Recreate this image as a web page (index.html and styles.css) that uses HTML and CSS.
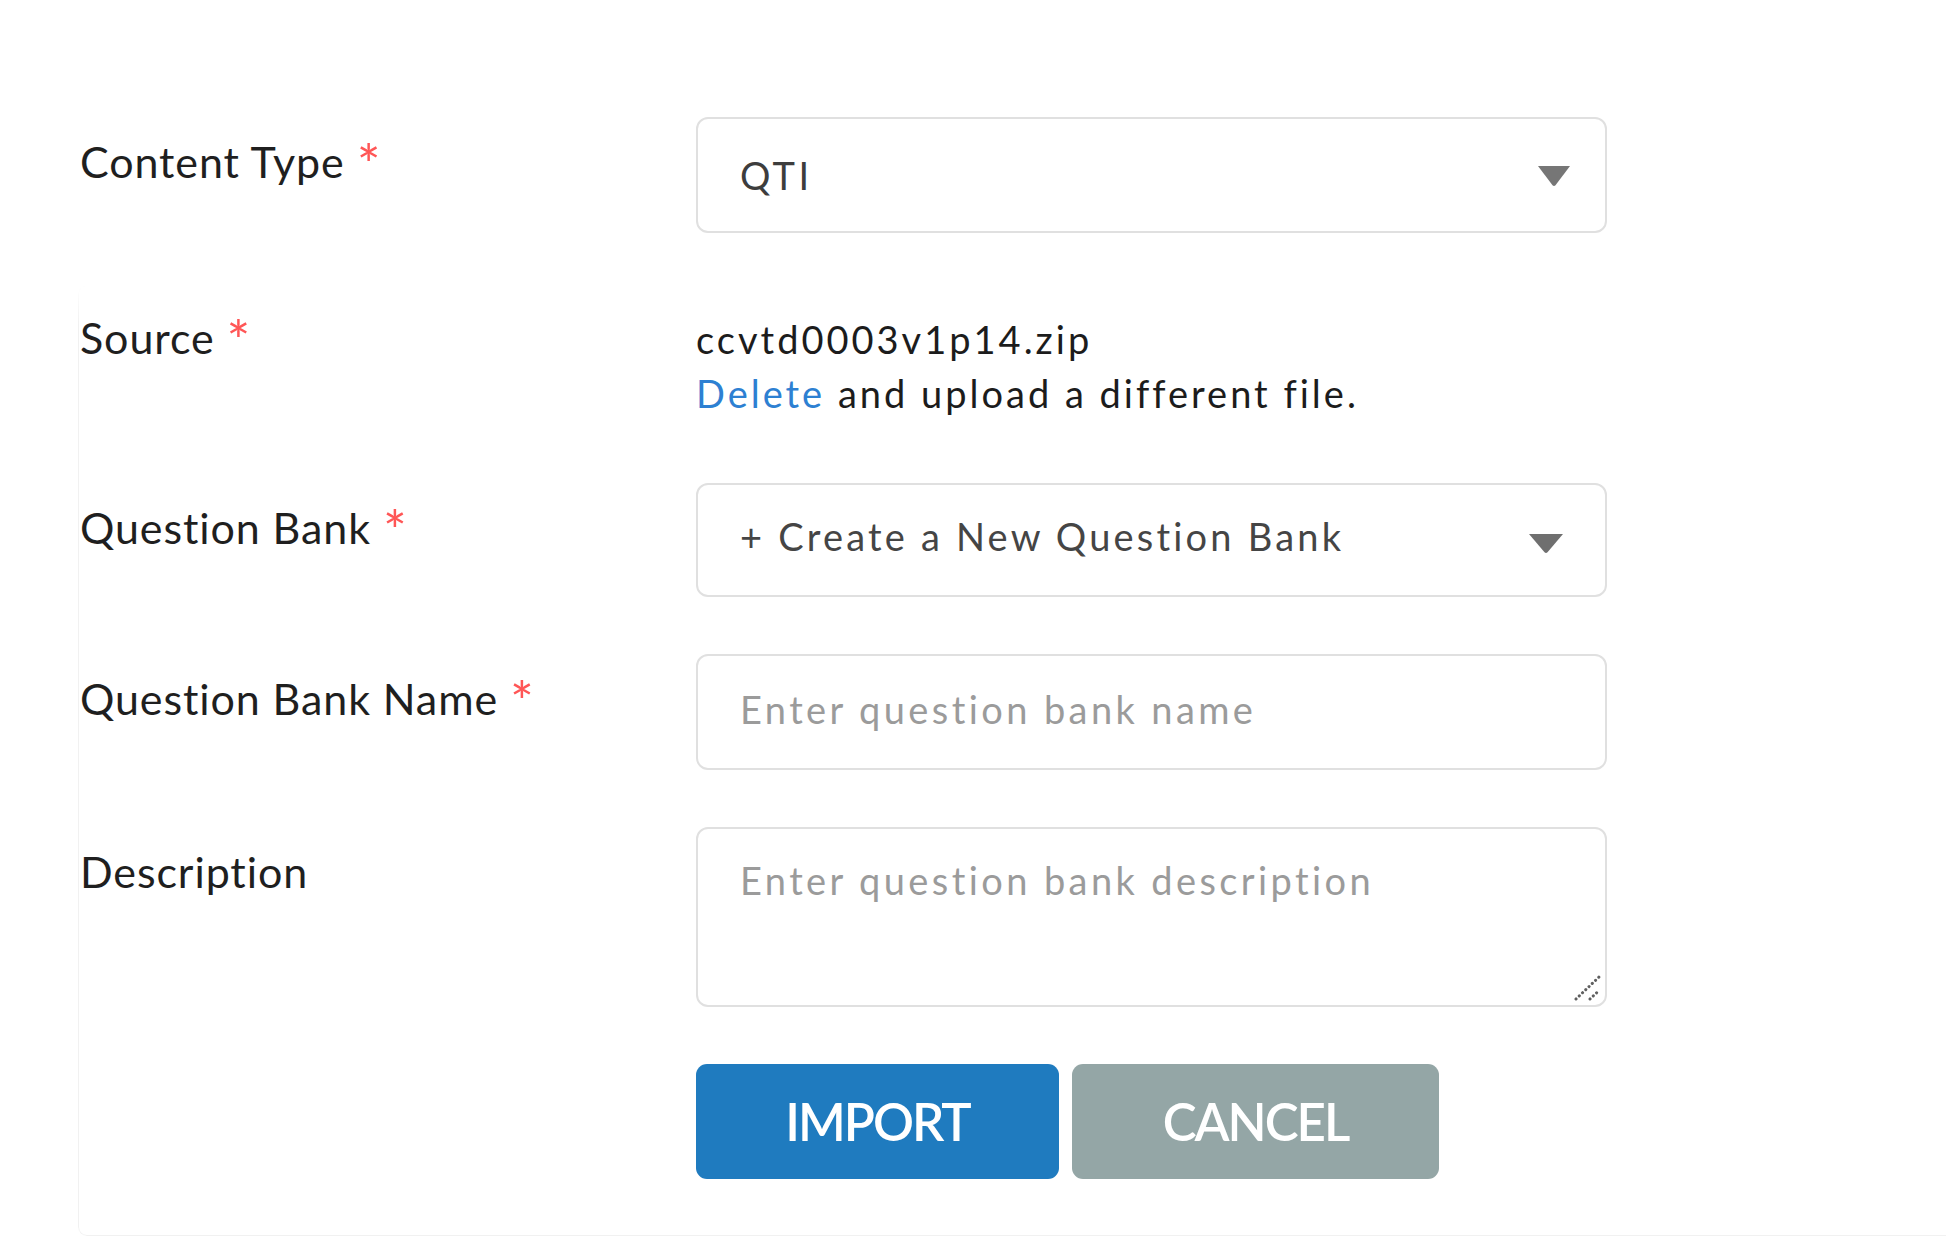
FILE: index.html
```html
<!DOCTYPE html>
<html lang="en">
<head>
<meta charset="utf-8">
<title>Import Question Bank</title>
<link rel="stylesheet" href="styles.css">
</head>
<body>
<main class="page">
  <form class="import-form">
    <div class="form-row">
      <label class="label" for="content-type">Content Type<span class="req">*</span></label>
      <div class="field-wrap">
        <select id="content-type" class="field select-field">
          <option>QTI</option>
        </select>
        <svg class="caret" width="32" height="20" viewBox="0 0 32 20" aria-hidden="true"><path d="M0 0 H32 L17.5 19.2 Q16 20.6 14.5 19.2 Z" fill="#767676"/></svg>
      </div>
    </div>

    <section class="card">
      <div class="form-row form-row--text">
        <span class="label label--text">Source<span class="req">*</span></span>
        <div class="file-info">
          <div class="file-name">ccvtd0003v1p14.zip</div>
          <div class="file-action"><a class="link" href="#">Delete</a> and upload a different file.</div>
        </div>
      </div>

      <div class="form-row">
        <label class="label" for="bank">Question Bank<span class="req">*</span></label>
        <div class="field-wrap">
          <select id="bank" class="field select-field select-field--bank">
            <option>+ Create a New Question Bank</option>
          </select>
          <svg class="caret caret--bank" width="34" height="19" viewBox="0 0 34 19" aria-hidden="true"><path d="M0 0 H34 L18.5 18.2 Q17 19.6 15.5 18.2 Z" fill="#6f6f6f"/></svg>
        </div>
      </div>

      <div class="form-row">
        <label class="label" for="bank-name">Question Bank Name<span class="req">*</span></label>
        <input id="bank-name" class="field text-field" type="text" placeholder="Enter question bank name">
      </div>

      <div class="form-row">
        <label class="label" for="bank-desc">Description</label>
        <div class="field-wrap">
          <textarea id="bank-desc" class="field area-field" placeholder="Enter question bank description"></textarea>
          <svg class="grip" width="28" height="26" viewBox="0 0 28 26" aria-hidden="true">
            <path d="M2 24 L25 2" stroke="#5f5f5f" stroke-width="3" stroke-linecap="round" stroke-dasharray="0.1 4.4" fill="none"/>
            <path d="M16 24 L25 15.5" stroke="#5f5f5f" stroke-width="3" stroke-linecap="round" stroke-dasharray="0.1 4.4" fill="none"/>
          </svg>
        </div>
      </div>

      <div class="form-row">
        <span class="label"></span>
        <div class="actions">
          <button type="button" class="btn btn-import">IMPORT</button>
          <button type="button" class="btn btn-cancel">CANCEL</button>
        </div>
      </div>
    </section>
  </form>
</main>
</body>
</html>
```

FILE: styles.css
```css
html, body {
  margin: 0;
  padding: 0;
  background: #ffffff;
  overflow: hidden;
}

body {
  font-family: "Lato", "Open Sans", sans-serif;
  color: #222222;
}

.page {
  padding: 117px 0 0 80px;
}

.import-form {
  display: flex;
  flex-direction: column;
}

.form-row {
  display: grid;
  grid-template-columns: 616px 911px;
  align-items: start;
}

.label {
  font-size: 43px;
  line-height: 54px;
  letter-spacing: 0.9px;
  padding-top: 18px;
  color: #1f1f1f;
  white-space: nowrap;
}

.label--text {
  padding-top: 0;
  margin-top: -4px;
}

.req {
  color: #ff5656;
  font-size: 56px;
  line-height: 0;
  vertical-align: -7px;
  margin-left: 12px;
}

.field-wrap {
  position: relative;
}

.field {
  display: block;
  box-sizing: border-box;
  width: 911px;
  margin: 0;
  border: 2px solid #e0e0e0;
  border-radius: 12px;
  background: #ffffff;
  font-family: "Lato", "Open Sans", sans-serif;
  font-size: 38px;
  letter-spacing: 3.4px;
  outline: none;
}

.select-field {
  height: 116px;
  padding: 0 100px 0 42px;
  appearance: none;
  -webkit-appearance: none;
  color: #3d3d3d;
}

.select-field--bank {
  height: 114px;
  padding-bottom: 8px;
  letter-spacing: 3.2px;
  color: #454545;
}

.caret {
  position: absolute;
  right: 37px;
  top: 49px;
  pointer-events: none;
}

.caret--bank {
  right: 44px;
  top: 51px;
}

.text-field {
  height: 116px;
  padding: 0 42px 6px;
  color: #333333;
}

.area-field {
  height: 180px;
  padding: 24px 42px;
  line-height: 54px;
  color: #333333;
  resize: none;
}

.grip {
  position: absolute;
  right: 5px;
  bottom: 6px;
  pointer-events: none;
}

.text-field::placeholder,
.area-field::placeholder {
  color: #9b9b9b;
  opacity: 1;
}

.card {
  position: relative;
  margin: 52px -60px 0 -2px;
  padding: 30px 0 57px 2px;
  display: flex;
  flex-direction: column;
  gap: 57px;
}

.card::before {
  content: "";
  position: absolute;
  inset: 0;
  border: 1px solid #f1f1f1;
  border-radius: 9px;
  box-shadow: 0 2px 2px rgba(0, 0, 0, 0.05);
  pointer-events: none;
  -webkit-mask-image: linear-gradient(to bottom, transparent 0, #000 40px);
  mask-image: linear-gradient(to bottom, transparent 0, #000 40px);
}

.form-row--text {
  padding-bottom: 6px;
}

.file-info {
  margin-top: -3px;
  font-size: 38px;
  line-height: 54px;
  letter-spacing: 3px;
  color: #1c1c1c;
}

.link {
  color: #2d80d2;
  text-decoration: none;
}

.actions {
  display: flex;
  gap: 13px;
}

.btn {
  height: 115px;
  border: none;
  border-radius: 11px;
  color: #ffffff;
  font-family: "Lato", "Open Sans", sans-serif;
  font-size: 51px;
  font-weight: 600;
  letter-spacing: -2px;
  padding: 0;
  cursor: pointer;
}

.btn-import {
  width: 363px;
  background: #1f7bbf;
}

.btn-cancel {
  width: 367px;
  background: #94a6a6;
}
```
